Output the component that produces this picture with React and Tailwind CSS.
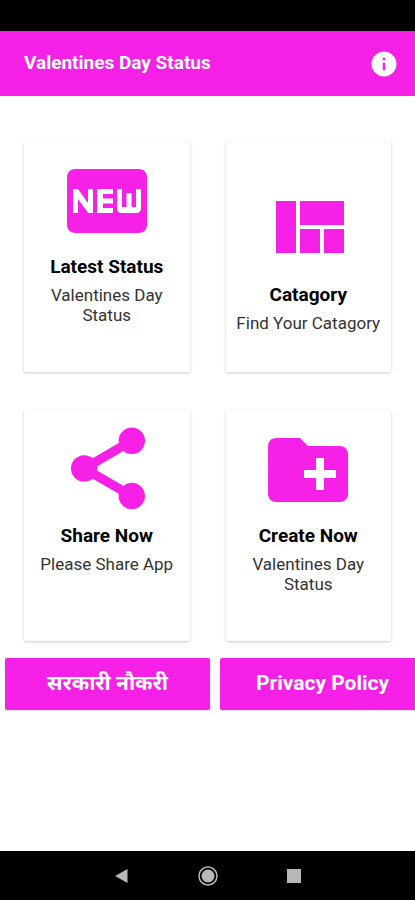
import { MdFiberNew, MdInfo } from 'react-icons/md';

const QuiltIcon = ({ className }) => (
  <svg viewBox="0 0 24 24" fill="currentColor" className={className} aria-hidden="true">
    <path d="M10 18h5v-6h-5v6zm-6 0h5V5H4v13zm12 0h5v-6h-5v6zM10 5v6h11V5H10z" />
  </svg>
);

const ShareIcon = ({ className }) => (
  <svg viewBox="0 0 24 24" fill="currentColor" className={className} aria-hidden="true">
    <path d="M18.200 4.700L6.300 11.600l11.900 6.900" fill="none" stroke="currentColor" strokeWidth="2.300" />
    <circle cx="18.200" cy="4.700" r="3.300" />
    <circle cx="6.300" cy="11.600" r="3.300" />
    <circle cx="18.200" cy="18.500" r="3.300" />
  </svg>
);

const NewFolderIcon = ({ className }) => (
  <svg viewBox="0 0 24 24" fill="currentColor" className={className} aria-hidden="true">
    <path d="M20 6h-8l-2-2H4c-1.11 0-1.99.89-1.99 2L2 18c0 1.11.89 2 2 2h16c1.11 0 2-.89 2-2V8c0-1.11-.89-2-2-2zm-1 8h-3v3h-2v-3h-3v-2h3V9h2v3h3v2z" />
  </svg>
);

const cards = [
  { title: 'Latest Status', text: 'Valentines Day Status', Icon: MdFiberNew, padding: 'pt-3' },
  { title: 'Catagory', text: 'Find Your Catagory', Icon: QuiltIcon, padding: 'pt-10' },
  { title: 'Share Now', text: 'Please Share App', Icon: ShareIcon, padding: 'pt-3' },
  { title: 'Create Now', text: 'Valentines Day Status', Icon: NewFolderIcon, padding: 'pt-3' },
];

const MenuCard = ({ title, text, Icon, padding }) => (
  <button
    type="button"
    className={`flex min-h-[231px] flex-col items-center rounded-xs bg-white px-2 pb-4 text-center shadow-[0_1px_3px_rgba(0,0,0,0.2)] ${padding}`}
  >
    <Icon className="size-24 text-[#f720e6]" />
    <span className="mt-1.5 text-[19px] leading-6 font-bold text-black">{title}</span>
    <span className="mt-1.5 max-w-37 text-[17px] leading-5 text-[#333333]">{text}</span>
  </button>
);

const App = () => {
  return (
    <div className="flex min-h-screen flex-col overflow-hidden bg-white font-[Roboto,'Noto_Sans',sans-serif]">
      <div className="h-[31px] bg-black" />

      <header className="flex h-[65px] items-center justify-between bg-[#f720e6] pr-4 pl-6 text-white">
        <h1 className="text-[19px] font-bold">Valentines Day Status</h1>
        <button type="button" aria-label="Info">
          <MdInfo className="size-[30px]" />
        </button>
      </header>

      <main className="pt-[45px]">
        <div className="grid grid-cols-2 gap-x-9 gap-y-[38px] px-6">
          {cards.map(card => (
            <MenuCard key={card.title} {...card} />
          ))}
        </div>

        {/* second button runs past the right edge */}
        <div className="mt-[17px] flex gap-2.5 pl-[5px] text-[21px] font-bold text-white">
          <button type="button" className="h-[52px] w-1/2 shrink-0 rounded-xs bg-[#f720e6] shadow-sm">
            सरकारी नौकरी
          </button>
          <button type="button" className="h-[52px] w-1/2 shrink-0 rounded-xs bg-[#f720e6] shadow-sm">
            Privacy Policy
          </button>
        </div>
      </main>

      <nav className="mt-auto flex h-[49px] items-center justify-center gap-[62px] bg-black text-[#b8b8b8]">
        <button type="button" aria-label="Back">
          <svg viewBox="0 0 24 24" fill="currentColor" className="size-6">
            <path d="M17.500 5v14L5 12z" />
          </svg>
        </button>
        <button type="button" aria-label="Home">
          <svg viewBox="0 0 24 24" className="size-6">
            <circle cx="12" cy="12" r="9" fill="none" stroke="currentColor" strokeWidth="1.500" />
            <circle cx="12" cy="12" r="6.500" fill="currentColor" />
          </svg>
        </button>
        <button type="button" aria-label="Recent apps">
          <svg viewBox="0 0 24 24" fill="currentColor" className="size-6">
            <rect x="5" y="5" width="14" height="14" />
          </svg>
        </button>
      </nav>
    </div>
  );
};

export default App;
